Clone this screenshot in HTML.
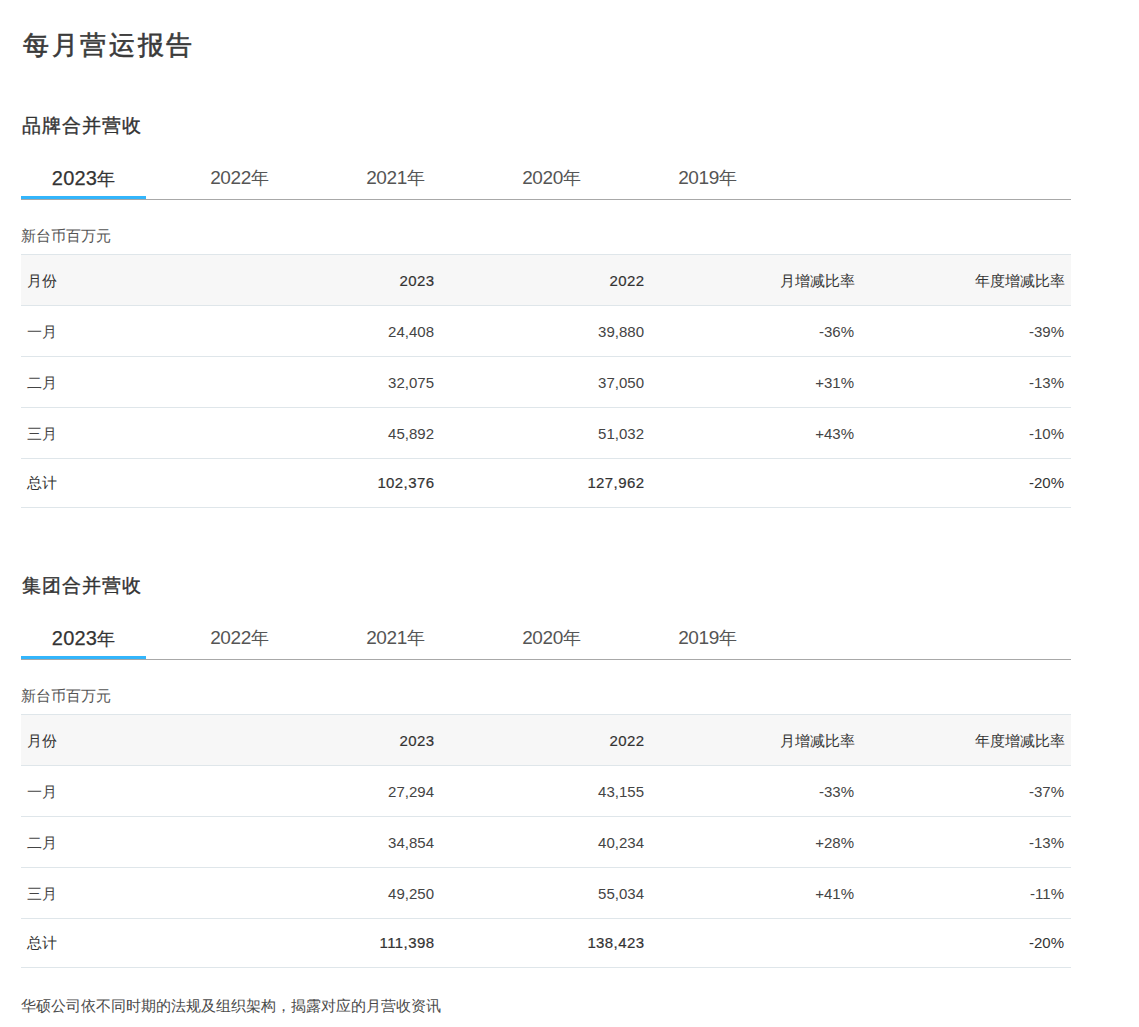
<!DOCTYPE html>
<html><head><meta charset="utf-8"><style>
html,body{margin:0;padding:0;background:#fff;}
body{width:1139px;height:1027px;overflow:hidden;position:relative;font-family:"Liberation Sans",sans-serif;color:#333;}
.h1{position:absolute;left:23px;top:25px;font-size:26px;line-height:40px;color:#3a3a3a;white-space:nowrap;letter-spacing:2.7px;-webkit-text-stroke:0.6px #3a3a3a;}
.sec{position:absolute;left:0;width:1139px;height:460px;}
.h2{position:absolute;left:22px;top:111px;font-size:19px;line-height:30px;color:#333;white-space:nowrap;letter-spacing:1px;-webkit-text-stroke:0.35px #333;}
.tabs{position:absolute;left:21px;top:160px;width:1050px;height:39px;border-bottom:1px solid #a8a8a8;}
.tab{position:absolute;top:0;width:125px;height:39px;text-align:center;line-height:36px;color:#555;white-space:nowrap;}
.tab .d{font-size:19px;letter-spacing:-0.4px;}
.tab .y{font-size:18px;}
.tab:nth-child(1){left:0}
.tab:nth-child(2){left:156px}
.tab:nth-child(3){left:312px}
.tab:nth-child(4){left:468px}
.tab:nth-child(5){left:624px}
.tab.act{color:#333;}
.tab.act::after{content:"";position:absolute;left:0;top:36px;width:125px;height:3px;background:#33b5fb;}
.tab.act .d{font-size:20px;letter-spacing:0.2px;-webkit-text-stroke:0.25px #3a3a3a;}
.tab.act .y{font-size:18px;-webkit-text-stroke:0.25px #3a3a3a;}
.unit{position:absolute;left:21px;top:226px;font-size:15px;line-height:20px;color:#555;white-space:nowrap;}
.tbl{position:absolute;left:21px;top:254px;width:1050px;}
.row{height:50px;border-top:1px solid #dfe6ea;display:flex;}
.row.hd{background:#f7f7f7;}
.row.tot{height:48px;border-bottom:1px solid #dfe6ea;}
.c{width:210px;box-sizing:border-box;padding:0 7px 0 6px;text-align:right;font-size:15px;line-height:50px;white-space:nowrap;}
.hd .c{line-height:52px;}
.tot .c{line-height:48px;}
.row.r .c{padding-top:1px;color:#444;}

.c1{text-align:left;}
.b{letter-spacing:0.4px;-webkit-text-stroke:0.2px #333;}
.b{padding-right:6.6px;}
.cj{padding-right:6px;}
.foot{position:absolute;left:21px;top:996px;font-size:15px;line-height:20px;color:#4a4a4a;white-space:nowrap;}

</style></head><body>
<div class="h1">每月营运报告</div>
<div class="sec" style="top:0px">
<div class="h2">品牌合并营收</div>
<div class="tabs">
<div class="tab act"><span class="d">2023</span><span class="y">年</span></div><div class="tab"><span class="d">2022</span><span class="y">年</span></div><div class="tab"><span class="d">2021</span><span class="y">年</span></div><div class="tab"><span class="d">2020</span><span class="y">年</span></div><div class="tab"><span class="d">2019</span><span class="y">年</span></div>
</div>
<div class="unit">新台币百万元</div>
<div class="tbl">
<div class="row hd"><div class="c c1">月份</div><div class="c b">2023</div><div class="c b">2022</div><div class="c cj">月增减比率</div><div class="c cj">年度增减比率</div></div>
<div class="row r"><div class="c c1">一月</div><div class="c">24,408</div><div class="c">39,880</div><div class="c">-36%</div><div class="c">-39%</div></div>
<div class="row r"><div class="c c1">二月</div><div class="c">32,075</div><div class="c">37,050</div><div class="c">+31%</div><div class="c">-13%</div></div>
<div class="row r"><div class="c c1">三月</div><div class="c">45,892</div><div class="c">51,032</div><div class="c">+43%</div><div class="c">-10%</div></div>
<div class="row tot"><div class="c c1">总计</div><div class="c b">102,376</div><div class="c b">127,962</div><div class="c"></div><div class="c">-20%</div></div>
</div>
</div>
<div class="sec" style="top:460px">
<div class="h2">集团合并营收</div>
<div class="tabs">
<div class="tab act"><span class="d">2023</span><span class="y">年</span></div><div class="tab"><span class="d">2022</span><span class="y">年</span></div><div class="tab"><span class="d">2021</span><span class="y">年</span></div><div class="tab"><span class="d">2020</span><span class="y">年</span></div><div class="tab"><span class="d">2019</span><span class="y">年</span></div>
</div>
<div class="unit">新台币百万元</div>
<div class="tbl">
<div class="row hd"><div class="c c1">月份</div><div class="c b">2023</div><div class="c b">2022</div><div class="c cj">月增减比率</div><div class="c cj">年度增减比率</div></div>
<div class="row r"><div class="c c1">一月</div><div class="c">27,294</div><div class="c">43,155</div><div class="c">-33%</div><div class="c">-37%</div></div>
<div class="row r"><div class="c c1">二月</div><div class="c">34,854</div><div class="c">40,234</div><div class="c">+28%</div><div class="c">-13%</div></div>
<div class="row r"><div class="c c1">三月</div><div class="c">49,250</div><div class="c">55,034</div><div class="c">+41%</div><div class="c">-11%</div></div>
<div class="row tot"><div class="c c1">总计</div><div class="c b">111,398</div><div class="c b">138,423</div><div class="c"></div><div class="c">-20%</div></div>
</div>
</div>
<div class="foot">华硕公司依不同时期的法规及组织架构，揭露对应的月营收资讯</div>
</body></html>
